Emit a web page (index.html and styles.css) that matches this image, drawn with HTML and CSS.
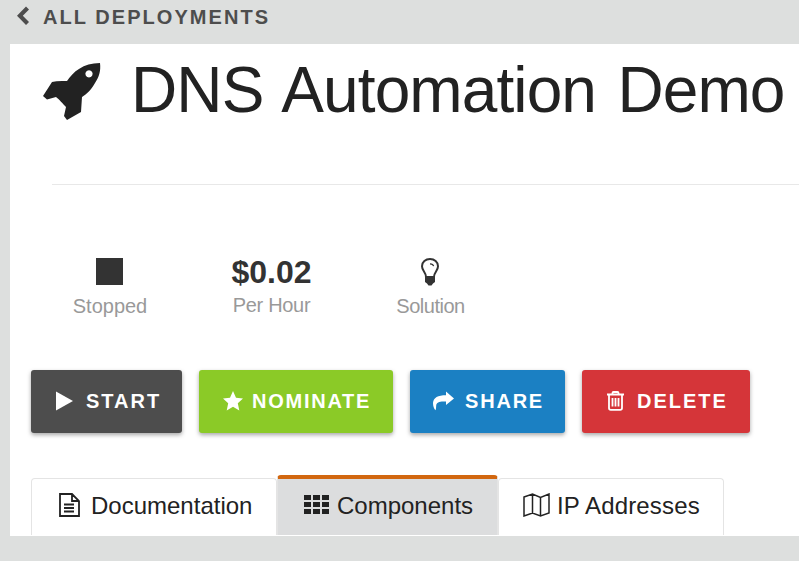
FILE: index.html
```html
<!DOCTYPE html>
<html lang="en">
<head>
<meta charset="utf-8">
<title>DNS Automation Demo</title>
<link rel="stylesheet" href="styles.css">
</head>
<body>
<nav class="back">
  <svg class="back-icon" width="12" height="20" viewBox="0 0 12 20"><path d="M9 0.5 12 3.5 5.8 9.7 12 15.9 9 19 0 9.7Z"/></svg>
  <span>ALL DEPLOYMENTS</span>
</nav>
<main class="panel">
  <header class="title">
    <svg class="rocket" width="58" height="58" viewBox="0 0 58 58"><path fill-rule="evenodd" d="M57 0C58 8 56 14 52 20 48 27 44 31 39 34L38 49 24 57 21 53 23 44C20 41 16 36 13 34L4 36.500 0 33 9 19Q14 17.500 24 18C30 9 40 0 57 0ZM46 7.300a3.600 3.600 0 1 0 .01 0Z"/></svg>
    <h1>DNS Automation Demo</h1>
  </header>
  <hr class="rule">
  <section class="stats">
    <div class="stat"><div class="stat-value"><i class="stopped"></i></div><span class="stat-label">Stopped</span></div>
    <div class="stat price"><div class="stat-value">$0.02</div><span class="stat-label">Per Hour</span></div>
    <div class="stat solution"><div class="stat-value"><svg width="18" height="28" viewBox="0 0 18 28"><path class="bulb-glass" d="M5 19C5 14 1 13 1 8.2 1 3.8 4.6 1 9 1s8 2.8 8 7.2C17 13 13 14 13 19"/><path class="bulb-shine" d="M9 5.8q3.2 0 3.6 2.4"/><path d="M4 18H14V24L12 25.5 10.5 27.5H7.5L6 25.5 4 24Z"/></svg></div><span class="stat-label">Solution</span></div>
  </section>
  <section class="actions">
    <button class="btn start"><svg width="17" height="20" viewBox="0 0 17 20"><path d="M0 .5 17 10 0 19.5Z"/></svg><span>START</span></button>
    <button class="btn nominate"><svg width="20" height="20" viewBox="0 0 20 20"><path d="M10 0 13 6.8 20 7.5 14.8 12.3 16.3 19.5 10 15.8 3.7 19.5 5.2 12.3 0 7.5 7 6.8Z"/></svg><span>NOMINATE</span></button>
    <button class="btn share"><svg width="21" height="20" viewBox="0 0 21 20"><path d="M13 .5 21 7.5 13 14V10.5C7 10 3.5 11 3.2 14.5 3 16.5 3.2 18 2.5 19.3 1 18 0 15 0 12 .3 6.5 5 4.2 13 4.2Z"/></svg><span>SHARE</span></button>
    <button class="btn delete"><svg class="trash" width="17" height="20" viewBox="0 0 17 20"><path d="M0 3.5H17M5.5 3V2Q5.5 1 6.5 1H10.5Q11.5 1 11.5 2V3M2 4V17Q2 18.8 3.8 18.8H13.2Q15 18.8 15 17V4M5.5 7V15.5M8.5 7V15.5M11.5 7V15.5"/></svg><span>DELETE</span></button>
  </section>
  <div class="tabs">
    <a class="tab docs"><svg class="line" width="21" height="24" viewBox="0 0 21 24"><path stroke-width="1.8" d="M1 1H13L20 8V23H1ZM13 1V8H20M5 11.5H15M5 15H15M5 18.5H15"/></svg><span>Documentation</span></a>
    <a class="tab active"><svg class="grid" width="25" height="19" viewBox="0 0 25 19"><path d="M0 0H7V5H0ZM9 0H16V5H9ZM18 0H25V5H18ZM0 7H7V12H0ZM9 7H16V12H9ZM18 7H25V12H18ZM0 14H7V19H0ZM9 14H16V19H9ZM18 14H25V19H18Z"/></svg><span>Components</span></a>
    <a class="tab ips"><svg class="line" width="27" height="24" viewBox="0 0 27 24"><path stroke-width="1.5" d="M1 4 9.5 1 17.5 4.5 26 1V20L17.5 23 9.5 20 1 23ZM9.5 1V20M17.5 4.5V23"/></svg><span>IP Addresses</span></a>
  </div>
</main>
</body>
</html>
```

FILE: styles.css
```css
* { box-sizing: border-box; }
body {
  margin: 0;
  background: #dddfde;
  color: #222;
  font-family: "Liberation Sans", Arial, sans-serif;
  overflow: hidden;
}
svg { display: block; flex: none; fill: currentColor; }
.back {
  display: flex;
  height: 44px;
  padding: 6px 0 0 17px;
  gap: 14px;
  color: #4d4d4d;
  font-size: 20px;
  font-weight: bold;
  line-height: 22px;
  letter-spacing: 2.05px;
}
.panel {
  height: 492px;
  margin-left: 10px;
  padding-top: 8px;
  background: #fff;
}
.title {
  display: flex;
  height: 132px;
  padding-left: 33px;
}
.rocket { margin-top: 11px; }
h1 {
  margin: 0 0 0 30px;
  font-size: 64px;
  font-weight: normal;
  line-height: 77px;
  letter-spacing: -.9px;
  word-spacing: 4.5px;
  white-space: nowrap;
}
.rule {
  height: 1px;
  margin: 0 0 0 42px;
  border: 0;
  background: #e8e8e8;
}
.stats {
  display: flex;
  height: 185px;
  padding: 73px 0 0 20px;
}
.stat {
  width: 160px;
  text-align: center;
}
.stat-value {
  display: flex;
  justify-content: center;
  height: 35px;
  color: #333;
  font-size: 32px;
  font-weight: bold;
  line-height: 28px;
}
.price { padding-left: 3px; }
.price .stat-value { height: 34px; }
.stopped { width: 27px; height: 27px; margin-right: 1px; background: #333; }
.bulb-glass { fill: none; stroke: #333; stroke-width: 2; }
.bulb-shine { fill: none; stroke: #333; stroke-width: 1.2; }
.stat-label {
  display: block;
  color: #999;
  font-size: 20px;
  line-height: 26px;
}
.price .stat-label { letter-spacing: -.3px; }
.solution .stat-label { padding-left: 1px; letter-spacing: -.5px; }
.actions { display: flex; gap: 17px; height: 105px; padding-left: 21px; }
.btn {
  display: flex;
  align-items: center;
  height: 63px;
  padding: 0 0 2px;
  border: 0;
  border-radius: 3px;
  box-shadow: 0 2px 4px rgba(0, 0, 0, .35);
  color: #fff;
  font: bold 20px/24px "Liberation Sans", Arial, sans-serif;
  letter-spacing: 2px;
}
.start { width: 151px; padding-left: 25px; gap: 13px; background: #4d4d4d; }
.nominate { width: 194px; padding-left: 24px; gap: 9px; background: #8bca27; letter-spacing: 1.75px; }
.share { width: 155px; padding-left: 23px; gap: 11px; background: #1b80c3; letter-spacing: 1.8px; }
.delete { width: 168px; padding-left: 25px; gap: 13px; background: #d53539; }
.trash { fill: none; stroke: currentColor; stroke-width: 1.8; }
.tabs { display: flex; align-items: flex-end; height: 60px; padding-left: 21px; }
.tab {
  display: flex;
  align-items: center;
  height: 57px;
  border: 1px solid #e4e4e4;
  border-bottom: 0;
  border-radius: 4px 4px 0 0;
  font-size: 24px;
  line-height: 28px;
}
.docs { width: 246px; padding: 0 0 2px 27px; gap: 11px; }
.active {
  width: 221px;
  height: 60px;
  padding: 0 0 3px 26px;
  gap: 8px;
  border-top: 4px solid #d2670f;
  background: #dcddde;
}
.grid { margin-top: -2px; }
.ips { width: 226px; padding: 0 0 2px 24px; gap: 7px; letter-spacing: .15px; }
.line { fill: none; stroke: currentColor; margin-top: -2px; }
```
